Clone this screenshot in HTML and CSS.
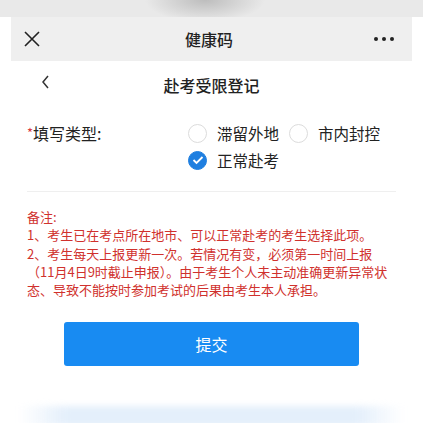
FILE: index.html
```html
<!DOCTYPE html>
<html lang="zh-CN">

<head>
    <meta charset="UTF-8">
    <meta name="viewport" content="width=device-width, initial-scale=1.0">
    <title>健康码</title>
    <link rel="stylesheet" href="styles.css">
</head>

<body>

    <div class="status"></div>

    <header class="nav">
        <span class="nav-close">
            <svg width="16" height="16" viewBox="0 0 16 16">
                <path d="M1 1L15 15M15 1L1 15" stroke="#222" stroke-width="1.6" fill="none" />
            </svg>
        </span>
        <h1>健康码</h1>
        <span class="nav-more"><i></i><i></i><i></i></span>
    </header>

    <div class="page">
        <div class="subhead">
            <span class="back">
                <svg width="9" height="14" viewBox="0 0 9 14">
                    <path d="M7 1L2 7L7 13" stroke="#333" stroke-width="1.5" fill="none" />
                </svg>
            </span>
            <h2>赴考受限登记</h2>
        </div>

        <form id="formulario">
            <div class="campo">
                <label class="etiqueta"><span class="req">*</span>填写类型:</label>
                <div class="opciones">
                    <label class="radio"><span class="circ"></span>滞留外地</label>
                    <label class="radio"><span class="circ"></span>市内封控</label>
                    <label class="radio on">
                        <span class="circ">
                            <svg width="12" height="10" viewBox="0 0 12 10">
                                <path d="M1.5 5L4.5 8L10.5 2" stroke="#fff" stroke-width="1.8" fill="none" />
                            </svg>
                        </span>正常赴考</label>
                </div>
            </div>

            <div class="notas">
                <p>备注:</p>
                <p>1、考生已在考点所在地市、可以正常赴考的考生选择此项。</p>
                <p>2、考生每天上报更新一次。若情况有变，必须第一时间上报<br>（11月4日9时截止申报）。由于考生个人未主动准确更新异常状态、导致不能按时参加考试的后果由考生本人承担。</p>
            </div>

            <button type="button">提交</button>
        </form>

        <div class="sombra"></div>
    </div>

</body>

</html>
```

FILE: styles.css
```css
body {
    margin: 0;
    background: #fff;
    font-family: "Noto Sans CJK SC", "Noto Sans", sans-serif;
    color: #222;
    width: 423px;
    height: 423px;
    overflow: hidden;
}

.status {
    height: 17px;
    background: radial-gradient(ellipse 60px 22px at 205px 0, #bdbdbd, #e9e9e9 100%);
}

.nav {
    margin: 0 11px;
    height: 44px;
    background: #efefef;
    display: flex;
    align-items: center;
    justify-content: space-between;
    padding: 0 18px 0 13px;
}

.nav h1 {
    margin: 0;
    font-size: 16px;
    font-weight: 500;
    color: #222;
}

.nav-close {
    display: flex;
    width: 20px;
}

.nav-more {
    display: flex;
    gap: 4px;
    width: 20px;
}

.nav-more i {
    width: 4px;
    height: 4px;
    border-radius: 50%;
    background: #222;
}

.page {
    padding: 0 27px;
}

.subhead {
    height: 48px;
    display: flex;
    align-items: center;
    justify-content: center;
    position: relative;
}

.subhead h2 {
    margin: 0;
    font-size: 16px;
    font-weight: 500;
    color: #222;
}

.back {
    position: absolute;
    left: 14px;
    top: 14px;
    display: flex;
}

.campo {
    display: flex;
    padding-top: 11px;
    padding-bottom: 18px;
    border-bottom: 1px solid #efefef;
}

.etiqueta {
    width: 161px;
    font-size: 16px;
    line-height: 26px;
    color: #222;
}

.req {
    color: #d9363e;
    font-size: 13px;
    vertical-align: top;
}

.opciones {
    display: flex;
    flex-wrap: wrap;
    row-gap: 1px;
    width: 208px;
}

.radio {
    display: flex;
    align-items: center;
    font-size: 15.5px;
    line-height: 26px;
    color: #222;
    margin-right: 10px;
}

.circ {
    width: 17px;
    height: 17px;
    border: 1px solid #dcdcdc;
    border-radius: 50%;
    margin-right: 10px;
    display: flex;
    align-items: center;
    justify-content: center;
}

.radio.on .circ {
    background: #1f7fe0;
    border-color: #1f7fe0;
}

.notas {
    padding-top: 16px;
    margin-right: -14px;
    color: #d0312d;
    font-size: 13px;
    line-height: 18.3px;
}

.notas p {
    margin: 0;
}

button {
    display: block;
    margin: 23px auto 0;
    width: 295px;
    height: 44px;
    border: 0;
    border-radius: 3px;
    background: #188bf2;
    color: #fff;
    font-family: inherit;
    font-size: 16px;
}

.sombra {
    margin: 40px -7px 0;
    height: 20px;
    background: linear-gradient(to right, rgba(228, 239, 251, 0), #e4effb 12%, #e4effb 88%, rgba(228, 239, 251, 0));
    filter: blur(3px);
}
```
